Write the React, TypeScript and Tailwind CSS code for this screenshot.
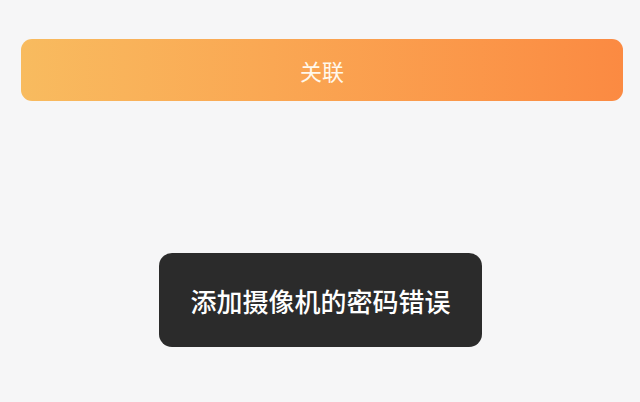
export default function App() {
  return (
    <div
      className="relative w-[640px] h-[402px] bg-[#f6f6f7] overflow-hidden"
      style={{ fontFamily: '"Noto Sans CJK SC", "Noto Sans", sans-serif' }}
    >
      <div className="pt-[39px] pl-[21px] pr-[17px]">
        <button className="w-full h-[62px] rounded-[11px] bg-gradient-to-r from-[#f8bb5f] to-[#fb8a42] text-[#fff8ec] text-[22px] flex items-center justify-center">
          关联
        </button>
      </div>

      {/* Toast */}
      <div className="absolute left-[159px] top-[253px] w-[323px] h-[94px] rounded-[13px] bg-[#2b2b2b] flex items-center justify-center text-white text-[26px] font-medium">
        添加摄像机的密码错误
      </div>
    </div>
  );
}
